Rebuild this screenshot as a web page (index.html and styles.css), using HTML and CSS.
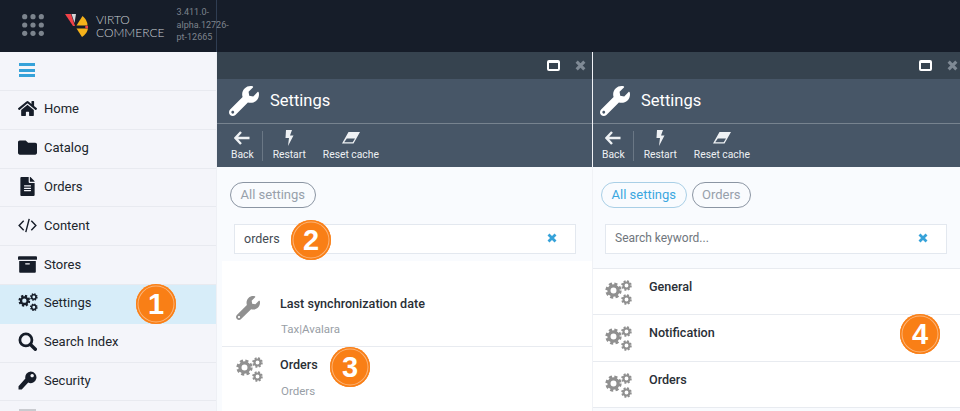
FILE: index.html
```html
<!DOCTYPE html>
<html lang="en">
<head>
    <meta charset="UTF-8">
    <meta name="viewport" content="width=device-width, initial-scale=1.0">
    <title>Virto Commerce Settings</title>
    <link rel="stylesheet" href="styles.css">
</head>
<body>
    <svg class="defs" width="0" height="0">
        <symbol id="i-wrench" viewBox="0 0 512 512"><path d="M507.73 109.1c-2.24-9.03-13.54-12.09-20.12-5.51l-74.36 74.36-67.88-11.31-11.31-67.88 74.36-74.36c6.62-6.62 3.43-17.9-5.66-20.16-47.38-11.74-99.55.91-136.58 37.93-39.64 39.64-50.55 97.1-34.05 147.2L18.74 402.76c-24.99 24.99-24.99 65.51 0 90.5 24.99 24.99 65.51 24.99 90.5 0l213.21-213.21c50.12 16.71 107.47 5.68 147.37-34.22 37.07-37.07 49.7-89.32 37.91-136.73zM64 472c-13.25 0-24-10.75-24-24 0-13.26 10.75-24 24-24s24 10.74 24 24c0 13.25-10.75 24-24 24z"/></symbol>
        <symbol id="i-gear" viewBox="0 0 20 20">
            <circle cx="10" cy="10" r="7.6" fill="none" stroke="currentColor" stroke-width="4" stroke-dasharray="3.4 2.57"/>
            <circle cx="10" cy="10" r="5.4" fill="none" stroke="currentColor" stroke-width="3.8"/>
        </symbol>
        <symbol id="i-cogs" viewBox="0 0 27 26">
            <use href="#i-gear" x="0" y="2" width="17" height="17"/>
            <use href="#i-gear" x="16" y="0" width="11" height="11"/>
            <use href="#i-gear" x="16" y="14" width="11" height="11"/>
        </symbol>
    </svg>

    <div class="topbar">
        <div class="top-left">
            <svg class="apps" viewBox="0 0 22 22">
                <circle cx="2.7" cy="2.7" r="2.6"/><circle cx="11" cy="2.7" r="2.6"/><circle cx="19.3" cy="2.7" r="2.6"/>
                <circle cx="2.7" cy="11" r="2.6"/><circle cx="11" cy="11" r="2.6"/><circle cx="19.3" cy="11" r="2.6"/>
                <circle cx="2.7" cy="19.3" r="2.6"/><circle cx="11" cy="19.3" r="2.6"/><circle cx="19.3" cy="19.3" r="2.6"/>
            </svg>
            <svg class="logo" viewBox="0 0 23 24">
                <polygon points="0,1 6,1 10,13 8,13" fill="#ef4148"/>
                <polygon points="6.500,1 11,1 9.500,10" fill="#d4d6d8"/>
                <path d="M11.500 12.500 L17.500 3 Q22.500 7 22.500 12.500 Z" fill="#f5b21a"/>
                <path d="M11.500 15.500 L23 15.500 Q22 21 17 24 Z" fill="#f5b21a"/>
                <circle cx="21.700" cy="14" r="1.600" fill="#ef4148"/>
            </svg>
            <div class="brand">VIRTO<br>COMMERCE</div>
            <div class="version">3.411.0-<br>alpha.12726-<br>pt-12665</div>
        </div>
    </div>

    <div class="main">
        <nav class="sidebar">
            <div class="toggle"><span></span><span></span><span></span></div>
            <a class="nav-item">
                <svg class="nav-icon" viewBox="0 0 576 512"><path d="M280.37 148.26L96 300.11V464a16 16 0 0 0 16 16l112.06-.29a16 16 0 0 0 15.92-16V368a16 16 0 0 1 16-16h64a16 16 0 0 1 16 16v95.64a16 16 0 0 0 16 16.05L464 480a16 16 0 0 0 16-16V300L295.67 148.26a12.19 12.19 0 0 0-15.3 0zM571.6 251.47L488 182.56V44.05a12 12 0 0 0-12-12h-56a12 12 0 0 0-12 12v72.61L318.47 43a48 48 0 0 0-61 0L4.34 251.47a12 12 0 0 0-1.6 16.9l25.5 31A12 12 0 0 0 45.15 301l235.22-193.74a12.19 12.19 0 0 1 15.3 0L530.9 301a12 12 0 0 0 16.9-1.6l25.5-31a12 12 0 0 0-1.7-16.93z"/></svg>
                Home
            </a>
            <a class="nav-item">
                <svg class="nav-icon" viewBox="0 0 512 512"><path d="M464 128H272l-64-64H48C21.49 64 0 85.49 0 112v288c0 26.51 21.49 48 48 48h416c26.51 0 48-21.49 48-48V176c0-26.51-21.49-48-48-48z"/></svg>
                Catalog
            </a>
            <a class="nav-item">
                <svg class="nav-icon" viewBox="0 0 384 512"><path d="M224 136V0H24C10.7 0 0 10.7 0 24v464c0 13.3 10.7 24 24 24h336c13.3 0 24-10.7 24-24V160H248c-13.2 0-24-10.8-24-24zm64 236c0 6.600-5.400 12-12 12H108c-6.600 0-12-5.400-12-12v-8c0-6.600 5.400-12 12-12h168c6.600 0 12 5.400 12 12v8zm0-64c0 6.600-5.400 12-12 12H108c-6.600 0-12-5.400-12-12v-8c0-6.600 5.400-12 12-12h168c6.600 0 12 5.400 12 12v8zm0-72v8c0 6.600-5.400 12-12 12H108c-6.600 0-12-5.400-12-12v-8c0-6.600 5.400-12 12-12h168c6.600 0 12 5.400 12 12zm96-114.100v6.100H256V0h6.100c6.400 0 12.500 2.500 17 7l97.900 98c4.500 4.500 7 10.600 7 16.900z"/></svg>
                Orders
            </a>
            <a class="nav-item">
                <svg class="nav-icon" viewBox="0 0 20 16"><path d="M6 3 L1.200 8 L6 13 M14 3 L18.800 8 L14 13 M11.800 1 L8.200 15" fill="none" stroke="currentColor" stroke-width="1.500"/></svg>
                Content
            </a>
            <a class="nav-item">
                <svg class="nav-icon" viewBox="0 0 512 512"><path d="M32 448c0 17.700 14.300 32 32 32h384c17.700 0 32-14.300 32-32V160H32v288zm160-212c0-6.600 5.400-12 12-12h104c6.600 0 12 5.400 12 12v8c0 6.600-5.400 12-12 12H204c-6.600 0-12-5.400-12-12v-8zM480 32H32C14.300 32 0 46.300 0 64v48c0 8.800 7.200 16 16 16h480c8.800 0 16-7.200 16-16V64c0-17.700-14.300-32-32-32z"/></svg>
                Stores
            </a>
            <a class="nav-item selected">
                <svg class="nav-icon nav-cogs"><use href="#i-cogs"/></svg>
                Settings
            </a>
            <a class="nav-item">
                <svg class="nav-icon" viewBox="0 0 18 18"><circle cx="7.500" cy="7.500" r="5.700" fill="none" stroke="currentColor" stroke-width="2.600"/><path d="M11.800 11.800 L16.400 16.400" stroke="currentColor" stroke-width="3.200" stroke-linecap="round"/></svg>
                Search Index
            </a>
            <a class="nav-item">
                <svg class="nav-icon" viewBox="0 0 18 18"><path fill-rule="evenodd" d="M12 0.500a5.500 5.500 0 1 1-2.300 10.500L3.500 17.500H0.500V14.500L7 7.200A5.500 5.500 0 0 1 12 0.500zM13.400 2.800a1.600 1.600 0 1 0 0.010 0z"/></svg>
                Security
            </a>
            <a class="nav-item nav-cut"><span class="nav-stub"></span></a>
            <span class="badge badge-1">1</span>
        </nav>

        <section class="blade blade-search">
            <div class="blade-top">
                <span class="win-max"></span>
                <svg class="win-close" viewBox="0 0 10 10"><path d="M1.500 1.500 L8.500 8.500 M8.500 1.500 L1.500 8.500"/></svg>
            </div>
            <div class="blade-head">
                <svg class="head-icon"><use href="#i-wrench"/></svg>
                <span class="head-title">Settings</span>
            </div>
            <div class="toolbar">
                <div class="tool tool-back">
                    <svg viewBox="0 0 16 14"><path d="M7 1 L1.500 7 L7 13 M2 7 H15.500" fill="none" stroke="currentColor" stroke-width="2.400"/></svg>
                    Back
                </div>
                <div class="tool-sep"></div>
                <div class="tool">
                    <svg viewBox="0 0 16 16"><path d="M5 0 H11 L9 5.500 H12.500 L7 16 L8 8 H4.500 Z"/></svg>
                    Restart
                </div>
                <div class="tool">
                    <svg class="eraser" viewBox="0 0 20 14"><path fill-rule="evenodd" d="M7.500 1 H19 L12.500 12.500 H1 Z M5.800 7.500 L3.200 11.300 H11.700 L14 7.500 Z"/></svg>
                    Reset cache
                </div>
            </div>
            <div class="blade-body">
                <div class="crumbs"><span class="pill">All settings</span></div>
                <div class="search-box">
                    <span class="search-value">orders</span>
                    <svg class="clear" viewBox="0 0 10 10"><path d="M1.500 1.500 L8.500 8.500 M8.500 1.500 L1.500 8.500"/></svg>
                </div>
                <div class="result-list">
                    <div class="result-row first">
                        <svg class="row-icon wrench"><use href="#i-wrench"/></svg>
                        <div>
                            <div class="row-title">Last synchronization date</div>
                            <div class="row-sub">Tax|Avalara</div>
                        </div>
                    </div>
                    <div class="result-row">
                        <svg class="row-icon"><use href="#i-cogs"/></svg>
                        <div>
                            <div class="row-title">Orders</div>
                            <div class="row-sub">Orders</div>
                        </div>
                    </div>
                </div>
            </div>
            <span class="badge badge-2">2</span>
            <span class="badge badge-3">3</span>
        </section>

        <section class="blade blade-groups">
            <div class="blade-top">
                <span class="win-max"></span>
                <svg class="win-close" viewBox="0 0 10 10"><path d="M1.500 1.500 L8.500 8.500 M8.500 1.500 L1.500 8.500"/></svg>
            </div>
            <div class="blade-head">
                <svg class="head-icon"><use href="#i-wrench"/></svg>
                <span class="head-title">Settings</span>
            </div>
            <div class="toolbar">
                <div class="tool tool-back">
                    <svg viewBox="0 0 16 14"><path d="M7 1 L1.500 7 L7 13 M2 7 H15.500" fill="none" stroke="currentColor" stroke-width="2.400"/></svg>
                    Back
                </div>
                <div class="tool-sep"></div>
                <div class="tool">
                    <svg viewBox="0 0 16 16"><path d="M5 0 H11 L9 5.500 H12.500 L7 16 L8 8 H4.500 Z"/></svg>
                    Restart
                </div>
                <div class="tool">
                    <svg class="eraser" viewBox="0 0 20 14"><path fill-rule="evenodd" d="M7.500 1 H19 L12.500 12.500 H1 Z M5.800 7.500 L3.200 11.300 H11.700 L14 7.500 Z"/></svg>
                    Reset cache
                </div>
            </div>
            <div class="blade-body">
                <div class="crumbs">
                    <span class="pill pill-active">All settings</span>
                    <span class="pill">Orders</span>
                </div>
                <div class="search-box">
                    <span class="search-placeholder">Search keyword...</span>
                    <svg class="clear" viewBox="0 0 10 10"><path d="M1.500 1.500 L8.500 8.500 M8.500 1.500 L1.500 8.500"/></svg>
                </div>
                <div class="group-list">
                    <div class="group-row"><svg class="row-icon"><use href="#i-cogs"/></svg><span class="row-title">General</span></div>
                    <div class="group-row"><svg class="row-icon"><use href="#i-cogs"/></svg><span class="row-title">Notification</span></div>
                    <div class="group-row"><svg class="row-icon"><use href="#i-cogs"/></svg><span class="row-title">Orders</span></div>
                </div>
            </div>
            <span class="badge badge-4">4</span>
        </section>
    </div>
</body>
</html>
```

FILE: styles.css
```css
html {
    overflow: hidden;
}

body {
    font-family: Roboto, 'Liberation Sans', sans-serif;
    margin: 0;
    height: 411px;
    overflow: hidden;
    background: #fff;
    color: #20252c;
    font-size: 13px;
}

.defs {
    position: absolute;
}

/* top bar */
.topbar {
    height: 52px;
    background: #161d29;
}

.top-left {
    display: flex;
    align-items: flex-start;
    width: 216px;
    height: 52px;
    box-sizing: content-box;
    border-right: 1px solid #2f3d52;
}

.apps {
    width: 22px;
    height: 22px;
    margin: 14px 0 0 22px;
    fill: #7c848d;
    flex: none;
}

.logo {
    width: 23px;
    height: 24px;
    margin: 13px 0 0 21px;
    flex: none;
}

.brand {
    margin: 13px 0 0 8px;
    font-family: Lato, Roboto, sans-serif;
    font-weight: 300;
    font-size: 12px;
    line-height: 13px;
    color: #c9cdd2;
    flex: none;
}

.version {
    margin: 6px 0 0 12px;
    font-size: 9px;
    line-height: 12.500px;
    color: #7d838c;
    white-space: nowrap;
    flex: none;
}

.main {
    display: flex;
    height: 359px;
    overflow: hidden;
}

/* sidebar */
.sidebar {
    width: 216px;
    height: 359px;
    overflow: hidden;
    background: #f4f5fa;
    flex: none;
    position: relative;
    border-right: 1px solid #eef0f5;
}

.toggle {
    height: 39px;
    border-bottom: 1px solid #e8eaf0;
    padding: 11px 0 0 19px;
    box-sizing: border-box;
}

.toggle span {
    display: block;
    width: 16px;
    height: 3px;
    margin-bottom: 2.500px;
    background: #36a2d9;
}

.nav-item {
    display: flex;
    align-items: center;
    height: 38.800px;
    box-sizing: border-box;
    border-bottom: 1px solid #e8eaf0;
    padding: 0 0 2px 18px;
    font-weight: 400;
    color: #20252c;
}

.nav-item.selected {
    background: #d7edf9;
    border-bottom-color: #d7edf9;
}

.nav-item.nav-cut {
    align-items: flex-start;
    padding: 8px 0 0 19px;
}

.nav-stub {
    width: 17px;
    height: 4px;
    background: #c9cbd0;
}

.nav-icon {
    width: 19px;
    height: 19px;
    margin-right: 7px;
    fill: #161d29;
    color: #161d29;
    flex: none;
}

.nav-icon.nav-cogs {
    width: 20px;
    margin-right: 6px;
}

/* blades */
.blade {
    position: relative;
    width: 375px;
    flex: none;
    display: flex;
    flex-direction: column;
}

.blade-groups {
    width: 368px;
    border-left: 1px solid #f0f2f6;
    box-sizing: border-box;
}

.blade-top {
    height: 27px;
    background: #36434f;
    display: flex;
    justify-content: flex-end;
    align-items: center;
    gap: 15px;
    padding-right: 6px;
    flex: none;
}

.blade-groups .blade-top {
    padding-right: 2px;
}

.win-max {
    width: 13px;
    height: 11px;
    border: 2px solid #fff;
    border-top-width: 3px;
    border-radius: 2px;
    box-sizing: border-box;
}

.win-close {
    width: 11px;
    height: 11px;
    fill: none;
    stroke: #7f8a95;
    stroke-width: 2.800;
}

.blade-head {
    height: 45px;
    box-sizing: border-box;
    background: #475667;
    border-bottom: 1px solid #77838f;
    display: flex;
    align-items: center;
    padding: 0 0 1px 12px;
    flex: none;
}

.blade-groups .blade-head {
    padding-left: 7px;
}

.head-icon {
    width: 30px;
    height: 30px;
    fill: #fff;
    flex: none;
}

.head-title {
    margin-left: 11px;
    font-size: 16.500px;
    color: #fff;
}

.toolbar {
    height: 43px;
    background: #475667;
    display: flex;
    align-items: center;
    padding-left: 14px;
    gap: 10px;
    flex: none;
}

.blade-groups .toolbar {
    padding-left: 9px;
}

.tool {
    display: flex;
    flex-direction: column;
    align-items: center;
    font-size: 10.300px;
    line-height: 13px;
    color: #eef1f4;
    margin-right: 7px;
}

.tool svg {
    width: 16px;
    height: 16px;
    fill: currentColor;
    margin-bottom: 2px;
}

.tool svg.eraser {
    width: 20px;
}

.tool-back {
    margin-right: -2px;
}

.tool-sep {
    width: 1px;
    height: 30px;
    background: #6a7785;
}

.blade-body {
    flex: 1;
    background: #f9fbfe;
    min-height: 0;
}

.crumbs {
    display: flex;
    gap: 5px;
    padding: 15px 0 0 13px;
    height: 42px;
}

.blade-groups .crumbs {
    padding-left: 8px;
}

.pill {
    display: block;
    height: 26px;
    line-height: 24px;
    padding: 0 9.500px;
    border: 1px solid #8b95a3;
    border-radius: 13px;
    box-sizing: border-box;
    font-size: 13px;
    color: #97a0ab;
}

.pill-active {
    border-color: #a9cfe6;
    color: #3ba7e0;
}

.search-box {
    display: flex;
    align-items: center;
    justify-content: space-between;
    height: 30px;
    width: 342px;
    box-sizing: border-box;
    margin: 0 0 0 17px;
    padding: 0 18px 2px 9px;
    background: #fff;
    border: 1px solid #e3e8ef;
    font-size: 12px;
}

.blade-groups .search-box {
    margin-left: 12px;
}

.search-value {
    font-size: 12.500px;
    color: #444b53;
}

.search-placeholder {
    color: #70767d;
}

.clear {
    width: 10px;
    height: 10px;
    fill: none;
    stroke: #36a2d9;
    stroke-width: 2.800;
}

.result-list {
    margin: 7px 0 0 5px;
    background: #fff;
    height: 150px;
}

.result-row {
    display: flex;
    align-items: flex-start;
    height: 64px;
    padding: 10px 0 0 14px;
    box-sizing: border-box;
}

.result-row:last-child .row-sub {
    margin-top: 12px;
}

.result-row.first {
    height: 86px;
    padding-top: 35px;
    border-bottom: 1px solid #e8ebf0;
}

.row-icon {
    width: 27px;
    height: 26px;
    margin-right: 17px;
    fill: #909090;
    color: #909090;
    flex: none;
}

.row-icon.wrench {
    width: 24px;
    height: 24px;
    margin-right: 20px;
}

.row-title {
    font-weight: 500;
    font-size: 12.600px;
    line-height: 15px;
    color: #2a2f36;
}

.row-sub {
    margin-top: 11px;
    margin-left: 1px;
    font-size: 11.500px;
    line-height: 14px;
    color: #989ea6;
}

.group-list {
    margin-top: 14px;
    background: #fff;
    border-top: 1px solid #e8ebf0;
}

.group-row {
    display: flex;
    align-items: flex-start;
    height: 46px;
    padding: 11px 0 0 12px;
    box-sizing: border-box;
    border-bottom: 1px solid #e8ebf0;
}

.group-row:nth-child(2) {
    height: 47px;
}

.group-row .row-title {
    margin-top: -1px;
}

/* numbered callouts */
.badge {
    position: absolute;
    width: 40px;
    height: 40px;
    border-radius: 50%;
    background: #f97f16;
    box-shadow: inset 0 0 0 1.500px #f97f16, inset 0 0 0 2.500px #fbb57a;
    color: #fff;
    font-family: 'Liberation Sans', Arial, sans-serif;
    font-weight: 700;
    font-size: 29px;
    line-height: 40px;
    text-align: center;
}

.badge-1 { left: 136px; top: 232px; }
.badge-2 { left: 74px; top: 168px; }
.badge-3 { left: 113px; top: 295px; }
.badge-4 { left: 307px; top: 262px; }
```
